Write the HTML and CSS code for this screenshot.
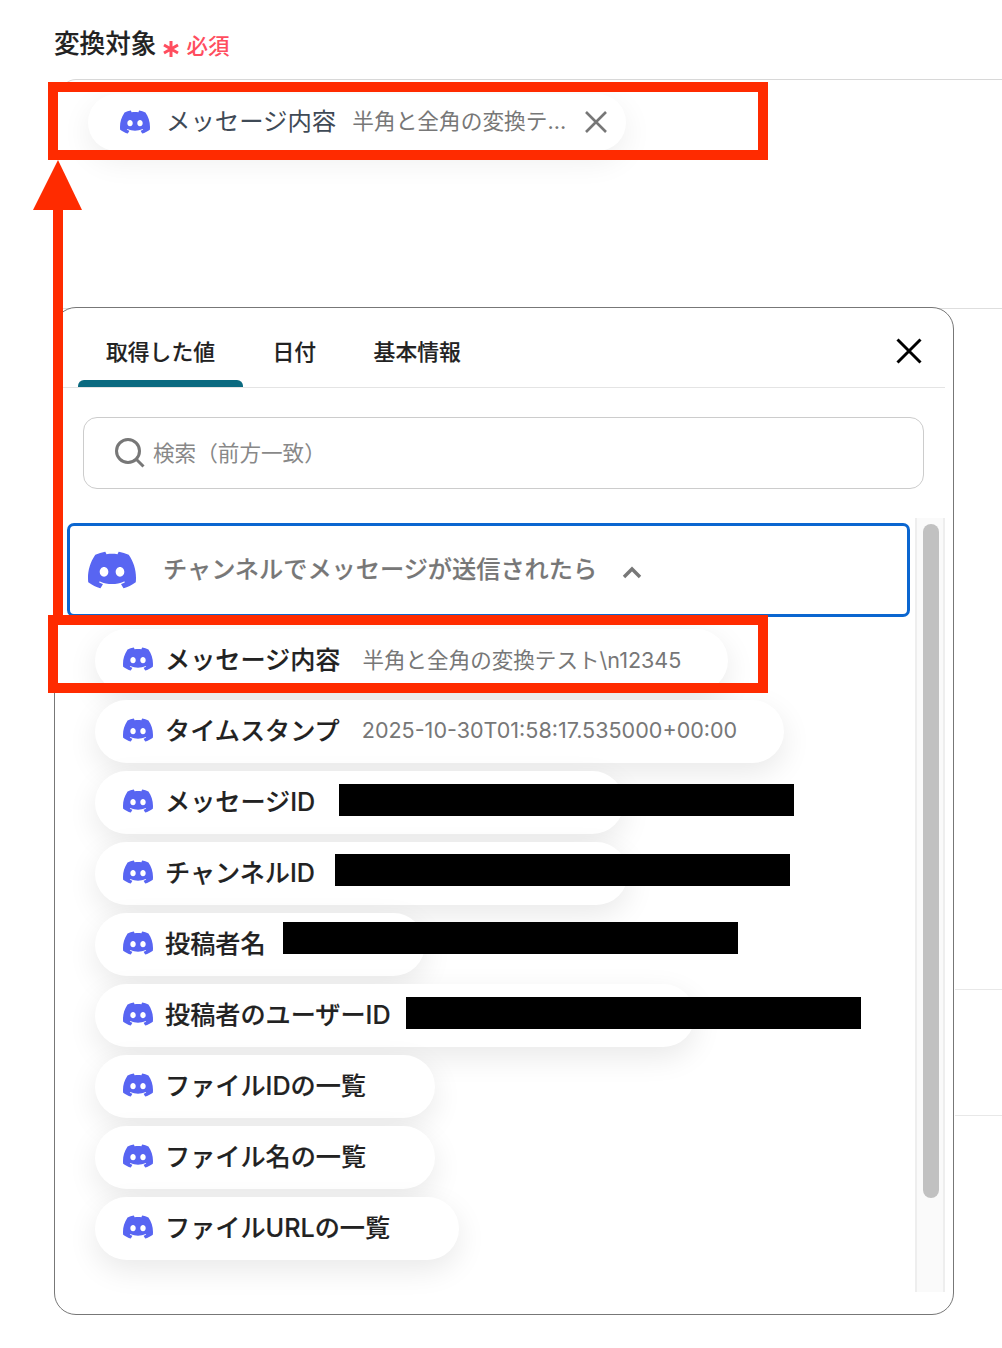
FILE: index.html
```html
<!DOCTYPE html>
<html lang="ja">
<head>
<meta charset="utf-8">
<title>変換対象</title>
<link rel="stylesheet" href="styles.css">
</head>
<body>
<svg class="defs" width="0" height="0" aria-hidden="true">
  <symbol id="discord" viewBox="0 0 24 24"><path d="M20.317 4.3698a19.7913 19.7913 0 00-4.8851-1.5152.0741.0741 0 00-.0785.0371c-.211.3753-.4447.8648-.6083 1.2495-1.8447-.2762-3.68-.2762-5.4868 0-.1636-.3933-.4058-.8742-.6177-1.2495a.077.077 0 00-.0785-.037 19.7363 19.7363 0 00-4.8852 1.515.0699.0699 0 00-.0321.0277C.5334 9.0458-.319 13.5799.0992 18.0578a.0824.0824 0 00.0312.0561c2.0528 1.5076 4.0413 2.4228 5.9929 3.0294a.0777.0777 0 00.0842-.0276c.4616-.6304.8731-1.2952 1.226-1.9942a.076.076 0 00-.0416-.1057c-.6528-.2476-1.2743-.5495-1.8722-.8923a.077.077 0 01-.0076-.1277c.1258-.0943.2517-.1923.3718-.2914a.0743.0743 0 01.0776-.0105c3.9278 1.7933 8.18 1.7933 12.0614 0a.0739.0739 0 01.0785.0095c.1202.099.246.1981.3728.2924a.077.077 0 01-.0066.1276 12.2986 12.2986 0 01-1.873.8914.0766.0766 0 00-.0407.1067c.3604.698.7719 1.3628 1.225 1.9932a.076.076 0 00.0842.0286c1.961-.6067 3.9495-1.5219 6.0023-3.0294a.077.077 0 00.0313-.0552c.5004-5.177-.8382-9.6739-3.5485-13.6604a.061.061 0 00-.0312-.0286zM8.02 15.3312c-1.1825 0-2.1569-1.0857-2.1569-2.419 0-1.3332.9555-2.4189 2.157-2.4189 1.2108 0 2.1757 1.0952 2.1568 2.419 0 1.3332-.9555 2.4189-2.1569 2.4189zm7.9748 0c-1.1825 0-2.1569-1.0857-2.1569-2.419 0-1.3332.9554-2.4189 2.1569-2.4189 1.2108 0 2.1757 1.0952 2.1568 2.419 0 1.3332-.946 2.4189-2.1568 2.4189Z"/></symbol>
</svg>
<div class="page">
  <div class="label-row">
    <span class="label">変換対象</span>
    <svg class="asterisk" viewBox="0 0 18 18"><path d="M9 1v16M2 5l14 8M16 5L2 13"/></svg>
    <span class="required">必須</span>
  </div>
  <div class="field">
    <div class="field-chip">
      <svg class="icon"><use href="#discord"/></svg>
      <span class="field-label">メッセージ内容</span>
      <span class="field-value">半角と全角の変換テ...</span>
      <svg class="chip-x" viewBox="0 0 22 22"><path d="M1 1l20 20M21 1L1 21"/></svg>
    </div>
  </div>
  <div class="panel">
    <div class="tabs">
      <div class="tab active">取得した値</div>
      <div class="tab">日付</div>
      <div class="tab">基本情報</div>
      <svg class="panel-x" viewBox="0 0 26 26"><path d="M1.5 1.5l23 23M24.5 1.5l-23 23"/></svg>
    </div>
    <div class="search">
      <svg class="search-icon" viewBox="0 0 30 30"><circle cx="13" cy="13" r="11.5"/><path d="M21.5 21.5L28.500 28.500"/></svg>
      <span class="search-text">検索（前方一致）</span>
    </div>
    <div class="body">
      <div class="list">
        <div class="group">
          <svg class="icon-big"><use href="#discord"/></svg>
          <span class="group-title">チャンネルでメッセージが送信されたら</span>
          <svg class="chevron" viewBox="0 0 20 13"><path d="M2 11l8-8 8 8"/></svg>
        </div>
        <div class="chips">
          <div class="chip"><svg class="icon"><use href="#discord"/></svg><span class="name">メッセージ内容</span><span class="value">半角と全角の変換テスト\n12345</span></div>
          <div class="chip"><svg class="icon"><use href="#discord"/></svg><span class="name">タイムスタンプ</span><span class="value">2025-10-30T01:58:17.535000+00:00</span></div>
          <div class="chip w-msg"><svg class="icon"><use href="#discord"/></svg><span class="name">メッセージID</span><span class="redact r-msg"></span></div>
          <div class="chip w-chan"><svg class="icon"><use href="#discord"/></svg><span class="name">チャンネルID</span><span class="redact r-chan"></span></div>
          <div class="chip w-author"><svg class="icon"><use href="#discord"/></svg><span class="name">投稿者名</span><span class="redact r-author"></span></div>
          <div class="chip w-user"><svg class="icon"><use href="#discord"/></svg><span class="name">投稿者のユーザーID</span><span class="redact r-user"></span></div>
          <div class="chip"><svg class="icon"><use href="#discord"/></svg><span class="name">ファイルIDの一覧</span></div>
          <div class="chip"><svg class="icon"><use href="#discord"/></svg><span class="name">ファイル名の一覧</span></div>
          <div class="chip"><svg class="icon"><use href="#discord"/></svg><span class="name">ファイルURLの一覧</span></div>
        </div>
      </div>
      <div class="scrollbar"><div class="thumb"></div></div>
    </div>
  </div>
  <div class="bg-line line-a"></div>
  <div class="bg-line line-b"></div>
  <div class="frame frame-top"></div>
  <div class="frame frame-row"></div>
  <div class="arrow-shaft"></div>
  <div class="arrow-head"></div>
</div>
</body>
</html>
```
FILE: styles.css
```css
* { box-sizing: border-box; }
html, body { margin: 0; padding: 0; background: #fff; }
body { font-family: "Inter", "Noto Sans CJK JP", sans-serif; color: #222; }
.defs { position: absolute; }
.page { position: relative; width: 1002px; height: 1348px; overflow: hidden; }

.label-row { height: 79px; padding: 28px 0 0 54px; display: flex; align-items: flex-start; }
.label { font-size: 25.6px; line-height: 32px; font-weight: 500; -webkit-text-stroke: .15px #222; color: #222; }
.asterisk { width: 18px; height: 18px; margin: 12px 0 0 6px; fill: none; stroke: #ff4d5e; stroke-width: 3; }
.required { font-size: 21.5px; line-height: 32px; margin: 2px 0 0 6px; font-weight: 500; color: #ff4d5e; }

.field { height: 230px; margin-left: 62px; padding: 14px 0 0 26px; border-top: 1px solid #d8d8d8; border-bottom: 1px solid #dedede; border-top-left-radius: 14px; }
.field-chip { width: 538px; height: 57px; padding: 0 0 2px 32px; display: flex; align-items: center; background: #fff; border-radius: 29px; box-shadow: 0 10px 30px rgba(0,0,0,.07); }
.icon { width: 30px; height: 30px; flex: none; fill: #5865f2; }
.field-label { margin: 0 0 5px 16px; font-size: 24.4px; color: #3f4a56; white-space: nowrap; }
.field-value { margin: 0 0 5px 16px; font-size: 21.7px; color: #777; white-space: nowrap; }
.chip-x { width: 22px; height: 22px; margin-left: 19px; fill: none; stroke: #777; stroke-width: 2.6; }

.panel { position: relative; width: 900px; height: 1008px; margin: -2px 0 0 54px; background: #fff; border: 1px solid #777; border-radius: 22px; }
.tabs { position: relative; height: 80px; margin: 0 8px; padding-left: 15px; display: flex; gap: 1.5px; border-bottom: 1px solid #e4e4e4; }
.tab { position: relative; padding: 29px 28px 0; font-size: 21.8px; line-height: 30px; font-weight: 500; -webkit-text-stroke: .15px #222; color: #222; white-space: nowrap; }
.tab.active::after { content: ""; position: absolute; left: 0; right: 0; bottom: 0; height: 7px; background: #0b6a80; border-radius: 6px 6px 0 0; }
.panel-x { position: absolute; right: 23px; top: 30px; width: 26px; height: 26px; fill: none; stroke: #000; stroke-width: 3; }

.search { width: 841px; height: 72px; margin: 29px 0 0 28px; padding-left: 31px; display: flex; align-items: center; border: 1px solid #ccc; border-radius: 14px; }
.search-icon { width: 30px; height: 30px; flex: none; fill: none; stroke: #777; stroke-width: 3; }
.search-text { margin: 0 0 3px 8px; font-size: 21.6px; color: #888; }

.body { height: 774px; margin-top: 29px; display: flex; justify-content: space-between; padding-right: 8px; }
.list { padding: 5px 0 0 12px; }
.group { width: 843px; height: 94px; padding-left: 18px; display: flex; align-items: center; border: 3px solid #0b66d0; border-radius: 7px; background: #fff; }
.icon-big { width: 48px; height: 48px; flex: none; fill: #5865f2; }
.group-title { margin: 0 0 6px 27px; font-size: 24.2px; font-weight: 500; -webkit-text-stroke: .15px #777; color: #777; white-space: nowrap; }
.chevron { width: 20px; height: 13px; margin: 4px 0 0 25px; fill: none; stroke: #777; stroke-width: 3.4; }

.chips { margin: 12px 0 0 28px; display: flex; flex-direction: column; align-items: flex-start; gap: 8px; }
.chip { position: relative; height: 63px; padding: 0 47px 4px 28px; display: flex; align-items: center; background: #fff; border-radius: 32px; box-shadow: 0 10px 30px rgba(0,0,0,.09); }
.name { margin: 0 22px 2px 12px; font-size: 25.15px; font-weight: 500; -webkit-text-stroke: .15px #222; color: #222; white-space: nowrap; }
.value { font-size: 21.55px; color: #777; white-space: nowrap; }
.w-msg { width: 529px; }
.w-chan { width: 533px; }
.w-author { width: 330px; }
.w-user { width: 600px; }
.redact { position: absolute; width: 455px; height: 32px; background: #000; }
.r-msg { left: 244px; top: 13px; }
.r-chan { left: 240px; top: 12px; }
.r-author { left: 188px; top: 9px; }
.r-user { left: 311px; top: 13px; }

.scrollbar { width: 30px; height: 774px; padding: 6px 6px 0; background: #fafafa; border-left: 2px solid #eee; border-right: 2px solid #eee; }
.thumb { width: 16px; height: 674px; background: #c1c1c1; border-radius: 8px; }

.bg-line { position: absolute; left: 955px; right: 0; height: 1px; background: #e8e8e8; }
.line-a { top: 989px; }
.line-b { top: 1115px; }

.frame { position: absolute; left: 48px; width: 720px; height: 78px; border: 10px solid #ff2b00; }
.frame-top { top: 82px; }
.frame-row { top: 615px; }
.arrow-shaft { position: absolute; left: 53px; top: 205px; width: 10px; height: 412px; background: #ff2b00; }
.arrow-head { position: absolute; left: 33px; top: 160px; width: 0; height: 0; border-left: 25px solid transparent; border-right: 24px solid transparent; border-bottom: 50px solid #ff2b00; }
```
